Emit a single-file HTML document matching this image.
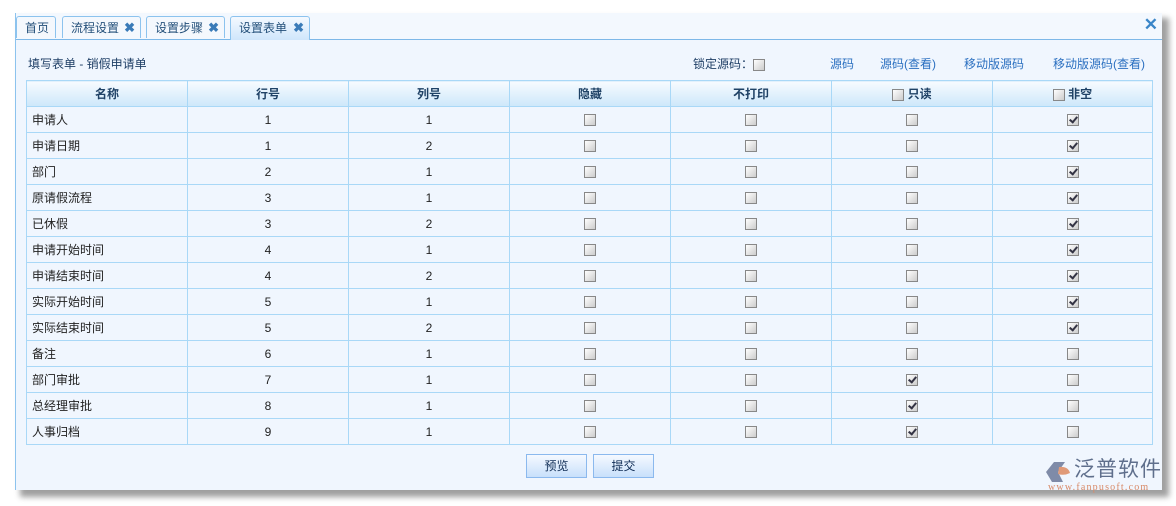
<!DOCTYPE html><html><head><meta charset="utf-8"><style>
body{margin:0;width:1176px;height:506px;background:#fff;position:relative;overflow:hidden;font-family:"Liberation Sans","Noto Sans CJK SC",sans-serif;font-size:12px;color:#222}
.shadow{position:absolute;left:20px;top:18px;width:1149px;height:479px;background:#888;filter:blur(3px);opacity:.8}
.panel{position:absolute;left:15px;top:13px;width:1146px;height:477px;background:#f0f6fe;border-left:1px solid #8cc3ee}
.bar{position:absolute;left:0;top:0;width:1146px;height:26px;background:#f3f8fe;border-bottom:1px solid #7db8e8}
.tab{position:absolute;top:3px;height:22px;border:1px solid #8cc3ee;border-bottom:none;border-radius:3px 3px 0 0;background:#f4f8fd;color:#24507a;line-height:22px;padding-left:8px;font-size:12px;box-sizing:border-box}
.tab b{color:#3a7bb8;font-size:13px;position:absolute;right:5px;top:0}
.tab.act{background:linear-gradient(#f4f9ff,#cfe6fb);height:24px}
.close{position:absolute;right:4px;top:2px;color:#3a86c8;font-size:17px;font-weight:bold}
.title{position:absolute;left:12px;top:42px;color:#1f3f66;font-size:12px}
.lnk{position:absolute;top:42px;color:#2a6fc0}
table{position:absolute;left:10px;top:67px;border-collapse:collapse;width:1127px}
td,th{border:1px solid #a9d8f7;height:25px;padding:0;text-align:center;font-size:12px}
th{background:linear-gradient(#f7fbff,#cde7fa);color:#1f4266;font-weight:bold;height:25px}
td:first-child{text-align:left;padding-left:5px}
.cb{display:inline-block;width:10px;height:10px;border:1px solid #888;background:linear-gradient(135deg,#fff,#ccc);vertical-align:middle;position:relative}
.cb.c::after{content:"";position:absolute;left:3px;top:0;width:3px;height:6px;border:solid #334;border-width:0 2px 2px 0;transform:rotate(40deg)}
.btn{position:absolute;top:441px;width:61px;height:24px;border:1px solid #8bb9ee;background:linear-gradient(#f5f9ff,#c8e0fb);box-sizing:border-box;text-align:center;line-height:22px;color:#0f2c55}
.logo{position:absolute;left:1045px;top:459px}
</style></head><body>
<div class="shadow"></div>
<div class="panel">
<div class="bar">
<div class="tab" style="left:0;width:40px">首页</div>
<div class="tab" style="left:46px;width:79px">流程设置<b>✖</b></div>
<div class="tab" style="left:130px;width:79px">设置步骤<b>✖</b></div>
<div class="tab act" style="left:214px;width:80px">设置表单<b>✖</b></div>
<div class="close">✕</div>
</div>
<div class="title">填写表单 - 销假申请单</div>
<div class="lnk" style="left:677px;color:#1f3f66">锁定源码：<span class="cb"></span></div>
<div class="lnk" style="left:814px">源码</div>
<div class="lnk" style="left:864px">源码(查看)</div>
<div class="lnk" style="left:948px">移动版源码</div>
<div class="lnk" style="left:1037px">移动版源码(查看)</div>
<table>
<tr><th style="width:160px">名称</th><th style="width:160px">行号</th><th style="width:160px">列号</th><th style="width:160px">隐藏</th><th style="width:160px">不打印</th><th style="width:160px"><span class="cb"></span> 只读</th><th><span class="cb"></span> 非空</th></tr>
<tr><td>申请人</td><td>1</td><td>1</td><td><span class="cb"></span></td><td><span class="cb"></span></td><td><span class="cb"></span></td><td><span class="cb c"></span></td></tr>
<tr><td>申请日期</td><td>1</td><td>2</td><td><span class="cb"></span></td><td><span class="cb"></span></td><td><span class="cb"></span></td><td><span class="cb c"></span></td></tr>
<tr><td>部门</td><td>2</td><td>1</td><td><span class="cb"></span></td><td><span class="cb"></span></td><td><span class="cb"></span></td><td><span class="cb c"></span></td></tr>
<tr><td>原请假流程</td><td>3</td><td>1</td><td><span class="cb"></span></td><td><span class="cb"></span></td><td><span class="cb"></span></td><td><span class="cb c"></span></td></tr>
<tr><td>已休假</td><td>3</td><td>2</td><td><span class="cb"></span></td><td><span class="cb"></span></td><td><span class="cb"></span></td><td><span class="cb c"></span></td></tr>
<tr><td>申请开始时间</td><td>4</td><td>1</td><td><span class="cb"></span></td><td><span class="cb"></span></td><td><span class="cb"></span></td><td><span class="cb c"></span></td></tr>
<tr><td>申请结束时间</td><td>4</td><td>2</td><td><span class="cb"></span></td><td><span class="cb"></span></td><td><span class="cb"></span></td><td><span class="cb c"></span></td></tr>
<tr><td>实际开始时间</td><td>5</td><td>1</td><td><span class="cb"></span></td><td><span class="cb"></span></td><td><span class="cb"></span></td><td><span class="cb c"></span></td></tr>
<tr><td>实际结束时间</td><td>5</td><td>2</td><td><span class="cb"></span></td><td><span class="cb"></span></td><td><span class="cb"></span></td><td><span class="cb c"></span></td></tr>
<tr><td>备注</td><td>6</td><td>1</td><td><span class="cb"></span></td><td><span class="cb"></span></td><td><span class="cb"></span></td><td><span class="cb"></span></td></tr>
<tr><td>部门审批</td><td>7</td><td>1</td><td><span class="cb"></span></td><td><span class="cb"></span></td><td><span class="cb c"></span></td><td><span class="cb"></span></td></tr>
<tr><td>总经理审批</td><td>8</td><td>1</td><td><span class="cb"></span></td><td><span class="cb"></span></td><td><span class="cb c"></span></td><td><span class="cb"></span></td></tr>
<tr><td>人事归档</td><td>9</td><td>1</td><td><span class="cb"></span></td><td><span class="cb"></span></td><td><span class="cb c"></span></td><td><span class="cb"></span></td></tr>
</table>
<div class="btn" style="left:510px">预览</div>
<div class="btn" style="left:577px">提交</div>
</div>
<div class="logo">
<svg width="28" height="22" style="position:absolute;left:0;top:2px"><path d="M9 1 L20 1 L13 11 L18 21 L7 21 L1 11 Z" fill="#7f8ba8"/><path d="M14 6 Q23 5 25 12 Q19 15 13 13 Z" fill="#e09a78"/></svg>
<div style="position:absolute;left:29px;top:-1px;font-size:21px;color:#5f6f8c;white-space:nowrap;letter-spacing:1px;line-height:24px">泛普软件</div>
<div style="position:absolute;left:3px;top:23px;font-size:10px;color:#d88a68;font-family:'Liberation Serif',serif;white-space:nowrap;letter-spacing:1.2px">www.fanpusoft.com</div>
</div>
</body></html>
